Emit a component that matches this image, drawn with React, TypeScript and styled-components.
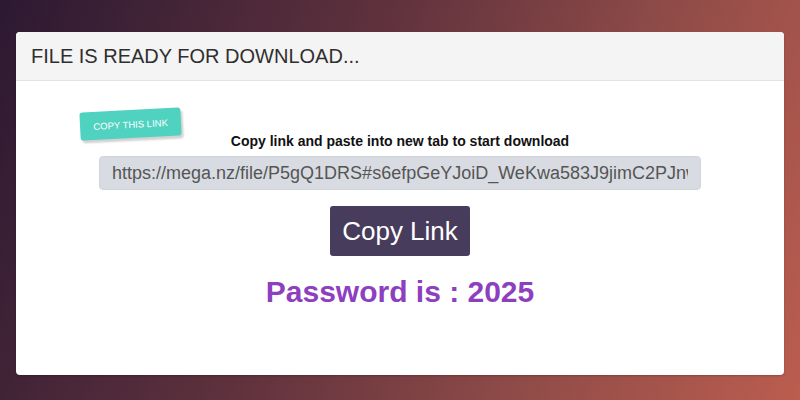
import React from "react";
import styled, { createGlobalStyle } from "styled-components";

const Global = createGlobalStyle`
  html, body { margin: 0; padding: 0; }
  body {
    width: 800px;
    height: 400px;
    overflow: hidden;
    font-family: "Liberation Sans", Arial, sans-serif;
    background: linear-gradient(112deg, #2c1932 0%, #5e313d 40%, #8f4b48 70%, #bb5d4f 100%);
  }
`;

const Page = styled.div`
  box-sizing: border-box;
  width: 800px;
  height: 400px;
  padding: 32px 16px 25px;
  display: flex;
`;

const Card = styled.div`
  flex: 1;
  display: flex;
  flex-direction: column;
  background: #ffffff;
  border-radius: 4px;
  overflow: hidden;
  box-shadow: 0 1px 2px rgba(0, 0, 0, 0.2);
`;

const Header = styled.div`
  height: 48px;
  display: flex;
  align-items: center;
  padding: 0 15px;
  background: #f4f4f4;
  border-bottom: 1px solid #e2e2e2;
`;

const Title = styled.h1`
  margin: 0;
  font-size: 20px;
  font-weight: 400;
  color: #2f2f2f;
`;

const Body = styled.div`
  position: relative;
  flex: 1;
  display: flex;
  flex-direction: column;
  align-items: center;
  padding-top: 50px;
`;

const Sticker = styled.div`
  position: absolute;
  left: 64px;
  top: 29px;
  width: 101px;
  height: 28px;
  display: flex;
  align-items: center;
  justify-content: center;
  background: #4fd2bf;
  color: #ffffff;
  font-size: 9.5px;
  border-radius: 3px;
  transform: rotate(-3deg);
  box-shadow: 2px 3px 2px rgba(0, 0, 0, 0.18);
`;

const Heading = styled.div`
  font-size: 14px;
  line-height: 20px;
  font-weight: 700;
  color: #111111;
`;

const LinkField = styled.input`
  box-sizing: border-box;
  margin-top: 5px;
  width: 602px;
  height: 34px;
  padding: 0 12px;
  border: 1px solid #d0d4da;
  border-radius: 4px;
  background: #d8dce2;
  color: #555555;
  font-family: "Liberation Sans", Arial, sans-serif;
  font-size: 18px;
  outline: none;
`;

const CopyButton = styled.button`
  margin-top: 16px;
  width: 140px;
  height: 50px;
  border: none;
  border-radius: 3px;
  background: #483c5c;
  color: #ffffff;
  font-family: "Liberation Sans", Arial, sans-serif;
  font-size: 26px;
  cursor: pointer;
`;

const Password = styled.div`
  margin-top: 19px;
  font-size: 30px;
  line-height: 34px;
  font-weight: 700;
  color: #8d3fc0;
`;

export default function App() {
  return (
    <>
      <Global />
      <Page>
        <Card>
          <Header>
            <Title>FILE IS READY FOR DOWNLOAD...</Title>
          </Header>
          <Body>
            <Sticker>COPY THIS LINK</Sticker>
            <Heading>Copy link and paste into new tab to start download</Heading>
            <LinkField
              readOnly
              value="https://mega.nz/file/P5gQ1DRS#s6efpGeYJoiD_WeKwa583J9jimC2PJnwXk"
            />
            <CopyButton>Copy Link</CopyButton>
            <Password>Password is : 2025</Password>
          </Body>
        </Card>
      </Page>
    </>
  );
}
